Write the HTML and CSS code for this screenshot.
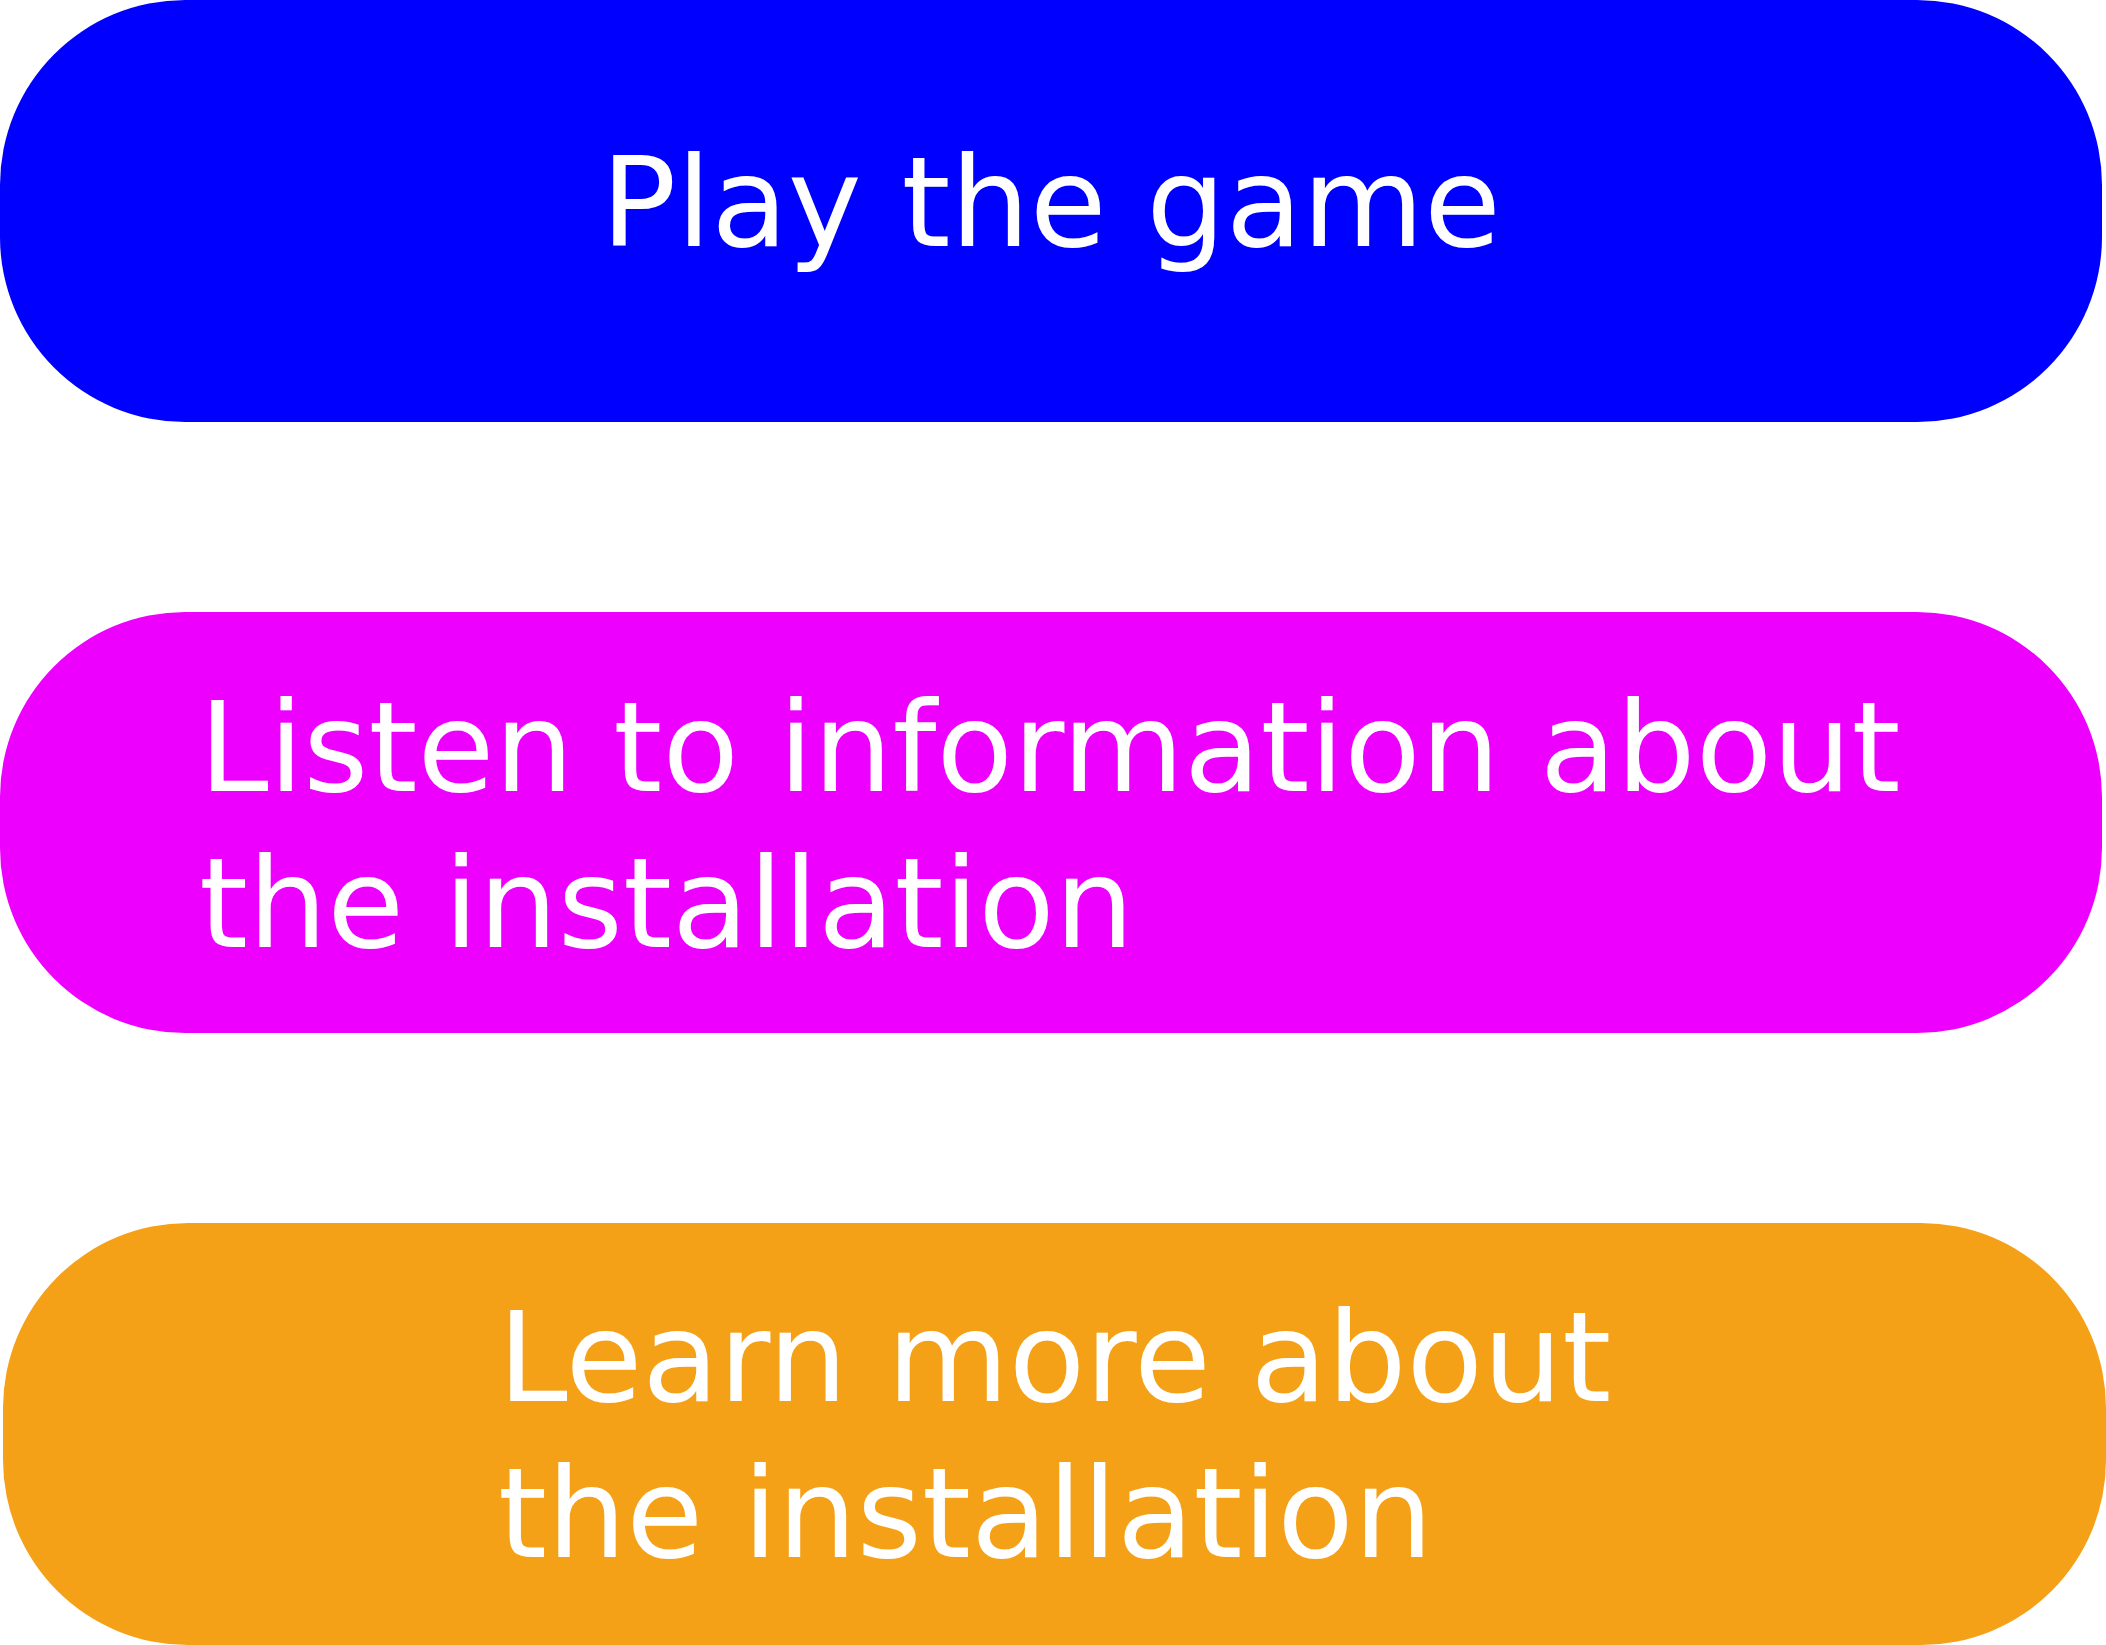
FILE: index.html
```html
<!DOCTYPE html>
<html lang="en">
<head>
<meta charset="utf-8">
<title>Menu</title>
<link rel="stylesheet" href="styles.css">
</head>
<body>
<main class="menu">
  <a class="pill pill-play" href="#play">Play the game</a>
  <a class="pill pill-listen" href="#listen">Listen to information about<br>the installation</a>
  <a class="pill pill-learn" href="#learn">Learn more about<br>the installation</a>
</main>
</body>
</html>
```

FILE: styles.css
```css
html, body {
  margin: 0;
  padding: 0;
  background: #ffffff;
}

.menu {
  display: flex;
  flex-direction: column;
  gap: 190px;
  width: 2106px;
}

.pill {
  display: block;
  box-sizing: border-box;
  height: 422px;
  border-radius: 185px;
  color: #ffffff;
  text-decoration: none;
  font-family: "DejaVu Sans", "Liberation Sans", sans-serif;
  font-size: 125px;
  line-height: 1.25;
  white-space: nowrap;
}

.pill-play {
  width: 2102px;
  background: #0000ff;
  padding-top: 125px;
  text-align: center;
}

.pill-listen {
  width: 2102px;
  height: 421px;
  background: #ee00ff;
  padding-top: 58px;
  padding-left: 199px;
}

.pill-learn {
  width: 2103px;
  height: 422px;
  margin-left: 3px;
  background: #f5a118;
  padding-top: 57px;
  padding-left: 495px;
}
```
